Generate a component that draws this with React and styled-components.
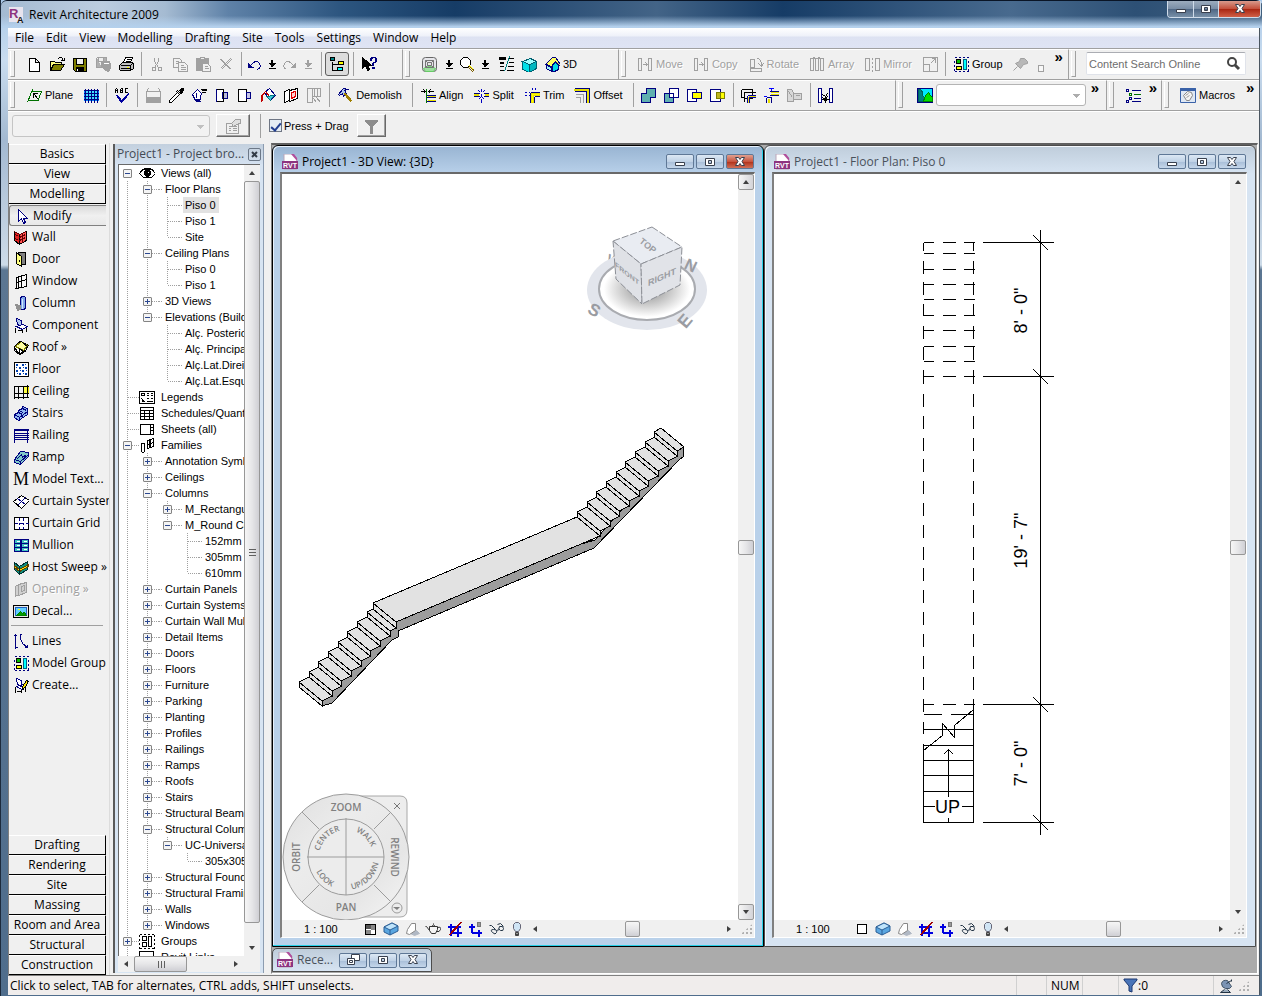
import React from "react";
import styled, { createGlobalStyle, css } from "styled-components";

const uiFont = `"Open Sans", "Noto Sans", sans-serif`;
const smallFont = `"Liberation Sans", Arial, sans-serif`;

const GlobalStyle = createGlobalStyle`
  * {
    box-sizing: border-box;
  }
  body {
    margin: 0;
    font-family: ${uiFont};
    font-size: 12px;
    line-height: 16px;
    color: #000;
  }
  button, input, select {
    font: inherit;
    color: inherit;
    margin: 0;
  }
  button {
    background: none;
    border: 0;
    padding: 0;
  }
`;

/* ---------- icons ---------- */

const navy = "#000080";
const grey = "#a0a0a0";

// every glyph is a list of [path, stroke, fill] on a 16px grid
const glyphs = {
  newDoc: [["M3 2h6l4 4v9H3zM9 2v4h4", "#000", "#fff"]],
  open: [
    ["M1 14V5h4l1 1h6v3", "#000", "#ffff80"],
    ["M1 14l3-6h11l-4 6z", "#000", "#808000"],
    ["M8 3l2-2h2l2 3M11 4h4V1", "#000"],
  ],
  save: [
    ["M1 2h13v13H3l-2-2z", "#000", "#808000"],
    ["M4 2h7v6H4z", "#000", "#f0f0f0"],
    ["M4 11h7v4H4z", "#000", "#000"],
    ["M5 12v2", "#fff"],
  ],
  saveAll: [
    ["M1 1h10v4M1 1v10h5", grey, "#b0b0b0"],
    ["M3 1h5v4H3z", grey, "#eee"],
    ["M6 5h8l2 5-3 5-4-2-3-3z", grey, grey],
    ["M8 7h5", "#fff"],
  ],
  print: [
    ["M5 6l2-5h7l-2 5", "#000", "#fff"],
    ["M8 3h4M7 5h4", "#000"],
    ["M1 9l3-3h10l1 2v4l-3 2H2l-1-1z", "#000", "#c0c0c0"],
    ["M2 9h10l2-2M2 12h10v2M12 9v4", "#000"],
    ["M8 11h2", "#ff0"],
  ],
  cut: [
    ["M5 1v4l4 6M9 1v4l-4 6", grey],
    ["M3 11h3v3H3zM9 11h3v3H9z", grey],
  ],
  copy: [
    ["M1 2h6l2 2v7H1zM3 5h3M3 7h3", grey],
    ["M6 6h6l3 3v6H6zM8 9h3M8 11h5M8 13h5", grey, "#f0f0f0"],
  ],
  paste: [
    ["M1 2h12v12H1z", grey, grey],
    ["M5 1h4v2H5z", grey, "#eee"],
    ["M7 7h5l3 3v5H7zM9 10h3M9 12h4", grey, "#f0f0f0"],
  ],
  del: [["M2 3l10 10M3 3l10 10M12 2L2 12M13 3L3 13", grey]],
  undo: [
    ["M2 6v5h5M2 11l4-4q4-4 7 0 2 4-2 6", navy],
    ["M2 7v4h4z", navy, navy],
  ],
  redo: [
    ["M13 6v5H8M13 11L9 7Q5 3 2 7q-2 4 2 6", grey],
    ["M13 7v4H9z", grey, grey],
  ],
  down: [["M7 3v7M8 3v7M4 7h7M5 8h5M6 9h3M4 12h7", "#000"]],
  downOff: [["M7 3v7M8 3v7M4 7h7M5 8h5M6 9h3M4 12h7", grey]],
  treeView: [
    ["M1 1h4v3H1zM3 5v9h5M3 8h5", "#000", "none"],
    ["M2 2h2v1H2z", "#008080", "#0ff"],
    ["M9 5h5v3H9z", "#000", "#ff0"],
    ["M8 11h5v3H8z", "#000", "#0ff"],
  ],
  help: [
    ["M1 1v11l3-3 2 5 2-1-2-4h4z", "#000", "#000"],
    ["M9 4V2l2-1h2l2 1v3l-3 2v2M10 4V2l2-1M14 2v3l-3 2v2M11 11h2v1h-2z", navy],
  ],
  viewCube: [
    ["M4 1h8q3 0 3 3v8q0 3-3 3H4q-3 0-3-3V4q0-3 3-3z", "#666", "#e6e6ea"],
    ["M2 12q6-4 12 0l-2 3H4z", "#6c6", "#9fe09f"],
    ["M4 4h8v7H4zM6 6h4v3H6zM4 4l2 2M12 4l-2 2M4 11l2-2M12 11l-2-2", "#777"],
  ],
  magnifier: [
    ["M4 1h4l3 3v4l-3 3H4L1 8V4z", "#000", "#fff"],
    ["M10 10l5 5M11 10l4 4M9 11l5 5", "#806000"],
    ["M10 9l4 4", "#ff0"],
  ],
  thinLines: [
    ["M1 1h6v2H1z", "#000", "#000"],
    ["M1 6h4M1 7h4M1 10h4M1 14h4M10 2h5M10 6h5M9 10h6M8 14h7", "#000"],
    ["M11 0L6 15", "#008080"],
  ],
  box: [
    ["M1 5l8-3 6 3-7 3z", "#006070", "#a0ffff"],
    ["M1 5l7 3v8l-7-3z", "#006070", "#00e0e8"],
    ["M8 8l7-3v7l-7 4z", "#006070", "#00b8c0"],
  ],
  house3d: [
    ["M2 8l6-3v10l-6-3z", navy, "#fff"],
    ["M8 9l3-3 3 3v4l-6 3z", navy, "#00d8e8"],
    ["M1 8l7-7 3 0 5 7-1 1-4-4-4 5-5-2z", navy, "#ffff60"],
    ["M2 9l5 2v4l-5-3z", navy, "#a0f0f8"],
  ],
  move: [["M1 2h3v12H1zM11 2h3v12h-3zM5 8h5M8 6l2 2-2 2", grey]],
  rotate: [["M2 3h4v8H2zM2 12h11v3H2zM8 2q5 0 5 7M10 7l3 3 2-3", grey]],
  array: [["M1 2h3v12H1zM6 2h3v12H6zM11 2h3v12h-3zM4 1l2 1M9 1l2 1", grey]],
  mirror: [["M1 2h4v12H1zM11 2h4v12h-4zM8 1v2M8 5v2M8 9v2M8 13v2", grey]],
  scale: [["M1 1h14v14H1zM1 8h6v7M8 7l5-5M9 2h4v4", grey]],
  group: [
    ["M1 1h2M5 1h2M9 1h2M13 1h2M1 15h2M5 15h2M9 15h2M13 15h2M1 4v2M1 8v2M1 12v2M15 4v2M15 8v2M15 12v2", navy],
    ["M3 3h4v4H3z", "#000", "#00c000"],
    ["M3 10h5v3H3z", "#000", "#ff0"],
    ["M10 3h3v10h-3z", "#006080", "#0ff"],
  ],
  pin: [
    ["M8 2h4l3 3v2l-4 1-3 4-5-5 4-2z", grey, "#b8b8b8"],
    ["M5 10l-4 4", grey],
  ],
  smallSquare: [["M5 9h5v6H5z", grey, "#f8f8f8"]],
  plane: [
    ["M4 4h12M1 13h11M6 2L1 15M15 4l-4 10", "#007000"],
    ["M7 6l5 6M7 6v4M7 6h4", "#000"],
  ],
  grid: [
    ["M1 3h14v10H1z", "#0080ff", "#40e0ff"],
    ["M0 3h16M0 6h16M0 9h16M0 12h16M2 1v14M5 1v14M8 1v14M11 1v14M14 1v14", navy],
  ],
  spell: [
    ["M1 5V2l1-1 1 1v3M1 3h2M6 1v4M6 1h2v2H6h2v2H6M13 1h-2v4h2", "#000"],
    ["M3 9l4 5 7-7M3 8l4 5 7-7M2 8l5 7 7-8", "#0000a0"],
  ],
  level: [
    ["M1 10h14v5H1z", grey, grey],
    ["M1 4h14M3 1L1 4v5M13 1l2 3v5", grey],
  ],
  dropper: [
    ["M9 5l2 2-8 8-2 0v-2z", "#000", "#fff"],
    ["M9 3l4 4M8 4l4 4M11 3l2-2h2v2l-2 3z", "#000", "#000"],
  ],
  paintPen: [
    ["M6 2l4 4-2 7H4L1 7z", navy, "#fff"],
    ["M5 5v5M4 14h5M4 12h5", navy],
    ["M9 2h6M10 3h5M10 5h4", "#000"],
  ],
  demoteFace: [
    ["M2 2h7v12H2z", navy, "#fff"],
    ["M8 5h5v6H8z", navy, "#b8b8d8"],
    ["M2 2h7v12H2", "#000"],
  ],
  matchFace: [
    ["M1 2h8v12H1z", "#000", "#fff"],
    ["M9 5h4v6H9z", navy, "#c8c8e8"],
  ],
  bucket: [
    ["M4 5l5-4 6 7-5 5z", navy, "#fff"],
    ["M6 9l8-1-4 5z", "#007080", "#40c8d8"],
    ["M5 5L1 8v6M4 5L2 7v6M5 4l4 5", "#c00000"],
    ["M9 1l6 7-5 5", navy],
  ],
  wallPaint: [
    ["M1 4l5-2v11l-5 2zM6 3l8-2v10l-8 3z", "#000", "#fff"],
    ["M8 5l4-1v5l-4 2z", "#e00000", "#ffd0d0"],
  ],
  splitFace: [["M1 1h5v14H1zM6 1h8v8H6zM8 1v8M11 1v8M7 11l3 4M10 10l4 5", grey]],
  hammer: [
    ["M1 7l5-6 4 1-3 1 2 3-3 3-1-3-3 2z", navy, "#b0c8e8"],
    ["M7 6l7 8M8 6l7 8M7 7l7 8", "#a08000", "none"],
  ],
  align: [
    ["M6 1v14", "#007000"],
    ["M0 4h5M3 2l2 2-2 2M13 4H8M10 2L8 4l2 2", "#000"],
    ["M6 8h9M6 10h9M6 14h9", navy],
    ["M7 9h8M7 13h8", "#e8e000"],
  ],
  split: [
    ["M0 6h6M0 9h6M10 6h6M10 9h6", navy],
    ["M0 7h5M0 8h5M11 7h5M11 8h5", "#e8e000"],
    ["M8 1v3M8 6v3M8 11v4M5 3l2 2M11 3L9 5M5 12l2-2M11 12l-2-2", "#0000c0"],
  ],
  trim: [
    ["M0 5h2M4 5h1M8 0v2M11 0v2M0 8h2M4 8h1", "#0000c0"],
    ["M6 5h10M10 9h6M6 5v10M10 9v6", navy],
    ["M7 6h8v2H9v7H7z", "#e8e000", "#ffff00"],
  ],
  offset: [
    ["M0 1h15v14M0 4h12v11", navy],
    ["M0 2h14v13h-1V3H0z", "#e8e000", "#ffff00"],
    ["M1 7h8v8M1 10h5v5", grey],
  ],
  join: [["M6 1h9v9h-5v5H1V6h5z", navy, "#60b0b0"]],
  cutGeom: [
    ["M1 6h9v9H1z", navy, "#60b0b0"],
    ["M6 1h9v9H6z", navy, "#fff"],
    ["M6 6h4v4H6z", navy],
  ],
  joinYellow: [
    ["M1 2h9v12H1z", navy, "#fff"],
    ["M6 5h9v6H6z", navy, "#ffff00"],
  ],
  unjoin: [
    ["M1 2h10v12H1z", navy, "#fff"],
    ["M7 5h8v6H7z", "#808000", "#ffff00"],
    ["M7 5h4v6H7z", "#808000", "#c0b820"],
  ],
  wallJoin: [
    ["M1 2h11v9H4v3M1 2v8h3M4 14V5h11", "#000"],
    ["M7 8h8M7 8v7M6 10h9M9 10v5", "#0000a0"],
    ["M8 9h7M8 9v6", "#e8e000"],
  ],
  coping: [
    ["M6 4h9M6 8h9M3 10v5M8 10v5M3 10h5", navy],
    ["M7 5h8M7 7h8M5 11v4M6 11v4", "#e8e000"],
    ["M8 0v3M5 1h5M0 9h3", "#0000ff"],
  ],
  wallOff: [["M1 2h4l2 3v9H1zM7 6h8v6H7zM2 4l4 6M9 8h4", grey, "#d8d8d8"]],
  beam: [
    ["M1 1h3v14H1zM12 1h3v14h-3z", navy, "#fff"],
    ["M4 12h8M5 7l3 2 2-3M8 9v6M5 10l5 4M10 9l-4 5", "#000"],
  ],
  picture: [
    ["M0 1h15v14H0z", navy, "#00e8ff"],
    ["M1 2h2q3 3 2 6l2 2-1 4H1z", "#006060", "#008080"],
    ["M6 14l2-6 3-3 2 3 2 2v4z", "#008000", "#00e000"],
  ],
  list: [
    ["M1 2h2v2H1zM6 3h9M4 10h2v2H4zM8 11h7M1 13h2v2H1z", navy],
    ["M4 6h2v2H4zM8 7h7", "#007000"],
    ["M6 14h9", navy],
  ],
  macro: [
    ["M0 1h15v14H0z", "#3a62a8", "#dfe8f4"],
    ["M0 1h15v2H0z", "#3a62a8", "#3a62a8"],
    ["M3 8l4-4 4 1 1 3-3 5-3 0z", "#888", "#f4f4f4"],
    ["M5 8l3-2M6 10l3-2", "#999"],
  ],
  props: [
    ["M1 5h12v10H1zM3 8h8M3 10h2M7 10h4M3 12h2M7 12h4", grey],
    ["M6 5l4-4h5v4l-4 1-3 2z", grey, "#e0e0e0"],
  ],
  filterOff: [["M2 2h12v1L9 8v7H7V8L2 3z", "#8c8c8c", "#8c8c8c"]],
  modify: [["M4 1v12l3-3 2 5 2-1-2-4h4z", navy, "#fff"]],
  wall: [
    ["M1 2l5 3v10l-5-4z", "#000", "#e02020"],
    ["M6 5l7-3v9l-7 4z", "#000", "#ff5050"],
    ["M1 2l5 3 7-3M2 5l3 2M2 9l3 2M6 8l6-3M6 11l6-3M9 4v9", "#600000"],
  ],
  door: [
    ["M4 1h8v12H8", "#000", "#808080"],
    ["M3 1l5 4v10l-5-3z", "#000", "#ffff80"],
    ["M6 8v2", "#000"],
  ],
  window: [["M3 4l10-3v12L3 15zM8 2v12M3 9l10-3M5 3v12M1 15h4", "#000", "#f8f8f8"]],
  column: [
    ["M7 2l2-1h2l1 1v11l-2 1H7z", navy, "#80a8e8"],
    ["M2 9l5 1v4l-3 1z", "#909090", "#909090"],
    ["M9 3v10", "#d0e4ff"],
  ],
  component: [
    ["M3 1l5 2v6L4 7z", navy, "#b0c8f0"],
    ["M3 9l6-2 5 2-5 3z", navy, "#fff"],
    ["M2 10v5M9 12v3M13 10v4M4 13h4", "#000"],
  ],
  roof: [
    ["M1 8l6-6 8 4-4 7-5 2z", "#000", "#fff"],
    ["M2 7l6-5 6 4-4 5z", "#808000", "#ffffa0"],
    ["M0 8l6-6h2l7 6M6 15V9l5 4M6 15l7-5V7M1 8v3l5 4", "#000"],
  ],
  floor: [
    ["M1 1h14v14H1z", "#000", "#fff"],
    ["M3 3h1v1H3zM9 3h1v1H9zM6 6h1v1H6zM12 6h1v1h-1zM3 9h1v1H3zM9 9h1v1H9zM6 12h1v1H6zM12 12h1v1h-1zM6 3h0M12 2v1M2 6h1M9 6h1M6 9h1M12 9h1M3 12h1M9 12h1", "#0040b0", "#0040b0"],
  ],
  ceiling: [
    ["M10 3h5v7h-5z", "#e8e000", "#ffff40"],
    ["M1 2v13M5 2v13M10 2v13M14 1v13M0 3h16M0 10h16M0 14h15", "#000"],
  ],
  stairs: [
    ["M1 9l4-2V5l4-2V1l5 2v6l-9 6-4-3z", navy, "#90b8f0"],
    ["M5 7l4 2M5 5l5 2M9 3l4 2M1 9l5 3 8-6M6 12v3M9 9v3", navy],
  ],
  railing: [["M0 2h16M0 3h16M0 6h16M0 8h16M0 10h16M0 12h16M1 2v13M14 2v13", navy]],
  ramp: [
    ["M1 10l6-8 8 1v4l-8 8-6-2z", navy, "#80c8c8"],
    ["M3 10l5-5 1 3 4-3M1 10l6 2 8-7M7 12v3", navy],
  ],
  curtainSystem: [
    ["M0 8l8-6 8 5-8 8z", "#000", "#fff"],
    ["M4 5l8 6M12 4l-8 8", navy],
  ],
  curtainGrid: [
    ["M1 2h14v12H1z", "#000", "#fff"],
    ["M6 2v3M6 7v2M6 11v3M10 2v3M10 7v2M10 11v3M1 8h3M6 8h4M12 8h3", navy],
  ],
  mullion: [
    ["M1 2h14v12H1z", navy, "#40c0c0"],
    ["M1 6h14M1 10h14M8 2v12M7 2v12", navy],
    ["M3 4h3M10 4h3M3 8h3M10 8h3M3 12h3M10 12h3", "#fff"],
  ],
  hostSweep: [
    ["M1 3l5 4 8-5v8l-8 5-5-5z", "#003030", "#109080"],
    ["M1 6l5 4 9-5v2l-9 5-5-4z", "#604000", "#ffe000"],
    ["M6 7v8", "#003030"],
  ],
  opening: [["M2 5l3-2v10l-3 2zM5 3l8-2v10l-8 3zM8 5l3-1v5l-3 1z", grey, "#d0d0d0"]],
  decal: [
    ["M0 2h15v12H0z", "#000", "#e8e8e8"],
    ["M2 4h11v8H2z", "#2060c0", "#60d0ff"],
    ["M3 12l4-4 2 2 2-1 2 3z", "#008000", "#00a000"],
    ["M4 6h2", "#ff0"],
  ],
  lines: [["M2 1v14M0 3l2-2 2 2M1 14h3M7 1v4l2 5 5 4M6 1h2M14 11v3h-3", navy]],
  create: [
    ["M3 1l5 2v6L4 7zM3 9l6-2 3 2-4 3z", navy, "#fff"],
    ["M2 9v6M8 12v3M12 9v5M3 14h4", "#000"],
    ["M9 9l4-6 2 1-4 7-2 1z", "#000", "#ffe000"],
  ],
  eye: [
    ["M0 8l4-4h8l4 4-4 4H4z", "#000", "#fff"],
    ["M6 5h4l1 2v2l-2 2H7L5 9V7z", "#000", "#000"],
    ["M1 6l4-3h6l4 3", "#000"],
    ["M8 7h1", "#fff"],
  ],
  legends: [
    ["M0 2h15v12H0z", "#000", "#fff"],
    ["M2 4h3v2H2zM7 4h2M11 4h2M7 6h2M11 6h2M2 9l2 2H2M7 9h2M11 9h2M2 12h3M7 12h6", "#000"],
  ],
  schedule: [["M1 2h13v12H1zM1 5h13M1 8h13M1 11h13M5 5v9M10 5v9", "#000", "#fff"]],
  sheet: [["M1 3h13v10H1zM11 3v10M11 6h3M11 9h3", "#000", "#fff"]],
  families: [
    ["M2 6h3v8l-1 1H3l-1-1z", "#000", "#fff"],
    ["M8 3l6-2v8l-6 2zM11 2v8M8 7l6-2M10 2v8", "#000", "#fff"],
  ],
  groups: [
    ["M0 1h2M4 1h2M8 1h2M12 1h2M0 15h2M4 15h2M8 15h2M12 15h2M0 1v2M0 5v2M0 9v2M0 13v2M15 1v2M15 5v2M15 9v2M15 13v2", "#000"],
    ["M3 3h4v4H3zM3 9h4v4H3zM9 3h3v10H9z", "#000", "#fff"],
  ],
  link: [["M0 2h14v12H0z", "#000", "#fff"]],
  detail: [
    ["M3 3h10v10H3z", "#000", "#fff"],
    ["M9 4h3v4H9zM4 9h4v3H4z", "#888", "#888"],
    ["M4 4h4v3H4z", "#555", "#555"],
  ],
  coarse: [["M3 3h9v9H3z", "#000", "#fff"]],
  shadow: [
    ["M6 12l6-3 3 3-5 2z", "#b0b8c4", "#b0b8c4"],
    ["M3 8l4-6 4 0v7l-6 4-3-1z", "#888", "#fff"],
  ],
  teapot: [
    [
      "M4 5h8v3l-2 4H6L4 9zM6 5q2-3 4 0M8 3v-1M4 9L1 5H0M12 6q4-1 3 2t-4 2",
      "#333",
      "#f4f4f4",
    ],
  ],
  cropOff: [
    ["M1 5h13M1 6h13M3 11h12M3 12h12M4 2v12M5 2v12M11 3v12M12 3v12", "#0000e0"],
    ["M14 1L2 14M15 1L3 14", "#a00000"],
  ],
  crop: [
    ["M1 5h6M1 6h6M4 2v9M5 2v9M4 11h10M4 12h10M11 8v7M12 8v7", "#0000e0"],
    ["M10 1h3v4h-3z", "#777", "#999"],
  ],
  glasses: [
    [
      "M1 4l2 0 4 4M5 8q4 0 3 3t-4 0 1-3zM11 5q4-1 4 2t-3 2-1-4zM8 9l3-1M9 3l3-1 3 3",
      "#234",
      "none",
    ],
  ],
  bulb: [
    ["M6 1h3l2 2v4l-2 3H6L4 7V3z", "#667", "#cfe4f4"],
    ["M6 11h3v3H6zM6 13h3", "#444", "#999"],
  ],
  satellite: [
    ["M3 5q1-4 6-3l4 6q-1 3-6 2-4-1-4-5z", "#456", "#7c94b4"],
    ["M8 5l5-3M13 1v2M6 11l-4 3h10l-3-3", "#234", "#9ab"],
  ],
};

const smoothGlyphs = [
  "viewCube",
  "pin",
  "macro",
  "shadow",
  "teapot",
  "glasses",
  "bulb",
  "satellite",
];

function Icon({ name, size = 16 }) {
  return (
    <svg
      width={size}
      height={size}
      viewBox="-0.5 -0.5 16 16"
      shapeRendering={smoothGlyphs.includes(name) ? "auto" : "crispEdges"}
      aria-hidden="true"
    >
      {glyphs[name].map(([d, stroke, fill = "none"], i) => (
        <path key={i} d={d} stroke={stroke} fill={fill} />
      ))}
    </svg>
  );
}

function BlueBox() {
  return (
    <svg width="16" height="16" viewBox="0 0 16 16" aria-hidden="true">
      <path d="M1 6l8-4 6 3v5l-8 4-6-3z" fill="#5aa6e0" stroke="#2b5e96" />
      <path d="M1 6l8-4 6 3-8 4z" fill="#bfe4fb" stroke="#2b5e96" />
      <path d="M7 9v5" stroke="#2b5e96" />
    </svg>
  );
}

function RvtLogo() {
  return (
    <svg width="16" height="16" viewBox="0 0 16 16" aria-hidden="true">
      <path d="M2 0h9l4 4v11H2z" fill="#fff" stroke="#b9a6b9" />
      <path d="M9 0h3l3 4v3z" fill="#b04f9c" />
      <path d="M0 7h16v8H0z" fill="#8d3480" />
      <text
        x="8"
        y="14"
        fontSize="7"
        fontWeight="700"
        fill="#fff"
        textAnchor="middle"
        fontFamily="Liberation Sans"
      >
        RVT
      </text>
    </svg>
  );
}

function AppLogo() {
  return (
    <svg width="16" height="18" viewBox="0 0 16 18" aria-hidden="true">
      <path d="M1 1h14v15H1z" fill="#e8e4ee" />
      <text x="1" y="12" fontSize="13" fontWeight="700" fill="#8d3480" fontFamily="Liberation Sans">
        R
      </text>
      <text x="9" y="17" fontSize="9" fontWeight="700" fill="#111" fontFamily="Liberation Sans">
        A
      </text>
    </svg>
  );
}

function CaptionGlyph({ kind }) {
  const stroke = "#39404e";
  return (
    <svg width="14" height="12" viewBox="-0.5 -0.5 14 12" aria-hidden="true">
      {kind === "min" && <path d="M2 6h9v3H2z" fill="#fff" stroke={stroke} />}
      {kind === "max" && (
        <path d="M2 2h9v7H2zM5 4v3h3V4z" fill="#fff" fillRule="evenodd" stroke={stroke} />
      )}
      {kind === "restore" && (
        <g fill="#fff" stroke={stroke}>
          <path d="M5 0h8v6H5z" />
          <path d="M1 4h7v6H1zM3 6h3v2H3z" />
        </g>
      )}
      {kind === "close" && (
        <path
          d="M2 1h3l1.500 2L8 1h3L8.500 5 11 9H8L6.500 7 5 9H2l2.500-4z"
          fill="#fff"
          stroke={stroke}
        />
      )}
    </svg>
  );
}

/* ---------- application frame ---------- */

const Frame = styled.div`
  display: flex;
  flex-direction: column;
  height: 100vh;
  min-height: 600px;
  padding: 0 2px 1px 7px;
  overflow: hidden;
  background: linear-gradient(
    to bottom,
    #a9c8e8 0,
    #c9dcef 60px,
    #a3b9d1 140px,
    #cddbe8 265px,
    #5b7692 270px,
    #4f6d8c 100%
  );
  border-left: 1px solid #1c2a3c;
`;

const TitleBar = styled.header`
  display: flex;
  align-items: center;
  height: 28px;
  flex: none;
  margin: 0 -2px 0 -7px;
  padding: 0 1px 0 7px;
  border-top: 1px solid #0a1526;
  border-radius: 6px 6px 0 0;
  background: linear-gradient(to bottom, rgba(180, 208, 236, 0) 55%, #b4d0ec 95%),
    linear-gradient(
      to right,
      #a4bad2 0,
      #bccde0 8%,
      #a5bbd2 13%,
      #5f82a8 18%,
      #2c557f 27%,
      #163c66 36%,
      #436487 52%,
      #163c66 62%,
      #486a8e 80%,
      #2d5075 90%,
      #40607f 100%
    );
`;

const AppTitle = styled.h1`
  flex: 1;
  margin: 0 0 0 5px;
  font-size: 12px;
  font-weight: 400;
`;

const CaptionGroup = styled.div`
  display: flex;
  align-self: flex-start;
  height: 17px;
  border: 1px solid #d0dcea;
  border-top: 0;
  border-radius: 0 0 4px 4px;
  overflow: hidden;
`;

const CaptionButton = styled.button`
  display: flex;
  align-items: center;
  justify-content: center;
  width: ${(props) => (props.$close ? 42 : 25)}px;
  background: ${(props) =>
    props.$close
      ? "linear-gradient(#d89a8c, #c4503c 48%, #a82410 50%, #d06048)"
      : "linear-gradient(#9cacbe, #7a8ea6 48%, #4e6684 50%, #7890a8)"};

  & + & {
    border-left: 1px solid #d0dcea;
  }
`;

const Content = styled.div`
  display: flex;
  flex-direction: column;
  flex: 1;
  min-height: 0;
  border-right: 1px solid #4a5560;
  background: #f0f0f0;
`;

const MenuBar = styled.nav`
  display: flex;
  align-items: center;
  gap: 12px;
  height: 21px;
  flex: none;
  padding-left: 7px;
  border-bottom: 1px solid #a0a0a0;
  background: linear-gradient(#fff 0, #eef1f9 40%, #dde2f2 45%, #dfe4f4 100%);
`;

const MenuItem = styled.button`
  white-space: nowrap;
`;

/* ---------- toolbars ---------- */

const ToolRow = styled.div`
  display: flex;
  height: 31px;
  flex: none;
  border-bottom: 1px solid #a0a0a0;
`;

const ToolGroup = styled.div`
  display: flex;
  align-items: center;
  flex: ${(props) => (props.$w ? `0 0 ${props.$w}px` : "1 1 0")};
  min-width: 0;
  padding-bottom: 2px;
  border-right: 1px solid #a0a0a0;
  border-top: 1px solid #fff;
  font-family: ${smallFont};
  font-size: 11px;

  &:last-child {
    border-right: 0;
  }

  &::before {
    content: "";
    flex: none;
    width: 3px;
    height: 25px;
    margin: 0 ${(props) => (props.$wide ? 10 : 7)}px 0 2px;
    border-right: 1px solid #a0a0a0;
    border-bottom: 1px solid #a0a0a0;
    border-left: 1px solid #fff;
  }
`;

const ToolButton = styled.button`
  display: flex;
  align-items: center;
  justify-content: center;
  flex: none;
  gap: 3px;
  width: ${(props) => (props.$narrow ? 18 : 23)}px;
  height: 24px;
  white-space: nowrap;

  ${(props) =>
    props.$label &&
    css`
      width: auto;
      padding: 0 6px 0 4px;
    `}
  ${(props) =>
    props.$pressed &&
    css`
      width: 24px;
      background: #dcdcdc;
      border: 1px solid #606060;
      border-radius: 3px;
    `}
  &:disabled {
    color: #a0a0a0;
    text-shadow: 1px 1px #fff;
  }
`;

const ToolSeparator = styled.span`
  flex: none;
  width: 1px;
  height: 24px;
  margin: 0 3px 0 4px;
  background: #a0a0a0;
`;

const Chevron = styled.button`
  flex: none;
  align-self: flex-start;
  width: 18px;
  font-size: 15px;
  font-weight: 700;
  line-height: 14px;
`;

const SearchBox = styled.label`
  display: flex;
  align-items: center;
  width: 160px;
  height: 23px;
  padding: 0 4px 0 2px;
  border: 1px solid #e0e3ea;
  border-top-color: #abadb3;
  border-radius: 2px;
  background: #fff;
`;

const SearchInput = styled.input`
  flex: 1;
  min-width: 0;
  border: 0;
  padding: 0;
  background: none;

  &::placeholder {
    color: #6d6d6d;
    opacity: 1;
  }
`;

const Combo = styled.select`
  flex: none;
  width: ${(props) => props.$w}px;
  height: 22px;
  appearance: none;
  border: 1px solid #b4b4b4;
  border-radius: 3px;
  background: linear-gradient(#adadad, #adadad) right 5px top 9px / 7px 1px no-repeat,
    linear-gradient(#adadad, #adadad) right 6px top 10px / 5px 1px no-repeat,
    linear-gradient(#adadad, #adadad) right 7px top 11px / 3px 1px no-repeat,
    linear-gradient(#adadad, #adadad) right 8px top 12px / 1px 1px no-repeat,
    ${(props) => (props.$white ? "#fff" : "#f4f4f4")};
`;

const OptionsBar = styled.div`
  display: flex;
  align-items: center;
  height: 32px;
  flex: none;
  padding: 0 0 4px 4px;
  border-top: 1px solid #fff;
  font-family: ${smallFont};
  font-size: 11px;
`;

const RaisedButton = styled.button`
  display: flex;
  align-items: center;
  justify-content: center;
  width: ${(props) => (props.$small ? 29 : 34)}px;
  height: 23px;
  margin: 0 6px;
  border: 1px solid;
  border-color: #fff #696969 #696969 #fff;
  box-shadow: inset -1px -1px #a0a0a0;
`;

const CheckLabel = styled.label`
  display: flex;
  align-items: center;
  gap: 2px;
  margin: 0 2px 0 5px;
`;

const CheckBox = styled.input`
  appearance: none;
  width: 13px;
  height: 13px;
  border: 1px solid #6f7684;
  background: #e4ecf4;
  display: grid;
  place-content: center;

  &:checked::before {
    content: "";
    width: 4px;
    height: 8px;
    border: solid #213e90;
    border-width: 0 2px 2px 0;
    transform: rotate(40deg);
  }
`;

/* ---------- design bar ---------- */

const Workspace = styled.main`
  display: flex;
  flex: 1;
  min-height: 0;
`;

const DesignBar = styled.aside`
  display: flex;
  flex-direction: column;
  width: 102px;
  flex: none;
  padding-top: 1px;
  border-left: 1px solid #808080;
  border-right: 1px solid #dcdcdc;
  background: #f0f0f0;
`;

const BarTab = styled.button`
  flex: none;
  width: 97px;
  height: 20px;
  border-right: 1px solid #000;
  border-bottom: 1px solid #000;
  border-top: 1px solid #fff;
  line-height: 16px;
  white-space: nowrap;
`;

const BarTools = styled.div`
  flex: 1;
  padding-top: 1px;
  min-height: 0;
  overflow: hidden;
`;

const BarTool = styled.button`
  display: flex;
  align-items: center;
  gap: 3px;
  width: 100px;
  height: 22px;
  padding-left: 4px;
  overflow: hidden;
  white-space: nowrap;

  ${(props) =>
    props.$active &&
    css`
      width: 97px;
      height: 21px;
      border: 1px solid #808080;
      border-right: 0;
      border-radius: 3px 0 0 3px;
      background: linear-gradient(#dadada, #f0f0f0 50%, #e8e8e8);
    `}
  &:disabled {
    color: #a0a0a0;
    text-shadow: 1px 1px #fff;
  }
  svg {
    flex: none;
  }
`;

const BarDivider = styled.hr`
  width: 92px;
  margin: 3px 2px 4px;
  border: 0;
  border-top: 1px solid #a0a0a0;
`;

/* ---------- project browser ---------- */

const Browser = styled.section`
  display: flex;
  flex-direction: column;
  width: 151px;
  flex: none;
  margin: 1px 7px 2px 3px;
  padding: 0 3px 1px;
  border-left: 2px solid #5a5a5a;
  border-right: 1px solid #8c9cb0;
  background: #d7e4f2;
`;

const BrowserHead = styled.div`
  display: flex;
  align-items: center;
  justify-content: space-between;
  height: 20px;
  flex: none;
  margin: 0 -3px;
  padding: 0 2px;
  color: #434a54;
  white-space: nowrap;
  background: linear-gradient(#c3d0de, #d4e1f0);
`;

const BrowserTitle = styled.span`
  overflow: hidden;
  text-overflow: ellipsis;
`;

const BrowserClose = styled.button`
  display: flex;
  flex: none;
  width: 13px;
  height: 13px;
  border: 1px solid #6c7888;
  border-radius: 2px;
  align-items: center;
  justify-content: center;
`;

const BrowserBody = styled.div`
  display: flex;
  flex: 1;
  min-height: 0;
  border: 1px solid #696969;
  border-right: 0;
  border-bottom: 0;
  background: #fff;
`;

const Tree = styled.ul`
  flex: 1;
  min-width: 0;
  margin: 0;
  padding: 0;
  list-style: none;
  overflow: hidden;
  font-family: ${smallFont};
  font-size: 11px;
`;

const TreeRow = styled.li`
  display: flex;
  align-items: center;
  height: 16px;
  white-space: nowrap;

  svg {
    flex: none;
  }
`;

const dots = "#a0a0a0 0 1px, transparent 1px 2px";
const rail = `repeating-linear-gradient(to bottom, ${dots}) 8px 0 / 1px`;

const Guide = styled.span`
  display: flex;
  align-items: center;
  flex: none;
  width: 20px;
  height: 16px;
  padding-left: 4px;
  background: ${(props) => (props.$line ? `${rail} ${props.$line} no-repeat` : "none")}
    ${(props) =>
      props.$node
        ? `${props.$line ? "," : ""} repeating-linear-gradient(to right, ${dots}) 9px 8px / 11px 1px no-repeat`
        : ""};
`;

const Stub = styled.span`
  flex: none;
  width: 4px;
  height: 1px;
  background: repeating-linear-gradient(to right, ${dots});
`;

const Expander = styled.button`
  width: 9px;
  height: 9px;
  border: 1px solid #848484;
  border-radius: 1px;
  background: linear-gradient(#2c4890, #2c4890) 1px 3px / 5px 1px no-repeat,
    ${(props) => (props.$open ? "" : "linear-gradient(#2c4890, #2c4890) 3px 1px / 1px 5px no-repeat,")}
    #f4f4f4;
`;

const TreeText = styled.span`
  padding: 0 3px 0 2px;
  margin-left: ${(props) => (props.$top ? 4 : 0)}px;
  background: ${(props) => (props.$selected ? "#e2e2e2" : "none")};
`;

/* ---------- scroll bars ---------- */

const ScrollTrack = styled.div`
  display: flex;
  flex: ${(props) => (props.$grow ? 1 : "none")};
  flex-direction: ${(props) => (props.$vertical ? "column" : "row")};
  ${(props) => (props.$vertical ? "width: 16px;" : "height: 16px;")}
  align-items: stretch;
  justify-content: space-between;
  background: #f0f0f0;
`;

const ScrollArrow = styled.button`
  display: flex;
  align-items: center;
  justify-content: center;
  flex: none;
  width: 16px;
  height: 16px;
  ${(props) =>
    props.$raised &&
    css`
      border: 1px solid #979797;
      border-radius: 2px;
      background: linear-gradient(to right, #f6f6f6, #d4d4d8);
    `}
`;

const ScrollThumb = styled.div`
  display: flex;
  align-items: center;
  justify-content: center;
  flex: ${(props) => props.$share || "none"};
  min-width: 15px;
  min-height: 15px;
  border: 1px solid #979797;
  border-radius: 2px;
  background: linear-gradient(
    ${(props) => (props.$vertical ? "to right" : "to bottom")},
    #f6f6f6,
    #e6e6e8 50%,
    #cfcfd4
  );
`;

const ScrollRest = styled.span`
  flex: ${(props) => props.$share};
`;

const ScrollCorner = styled.span`
  flex: none;
  width: 16px;
`;

const arrowPaths = {
  up: "M1 6l3-4 3 4z",
  down: "M1 2l3 4 3-4z",
  left: "M6 1L2 4l4 3z",
  right: "M2 1l4 3-4 3z",
};

function Arrow({ dir, raised }) {
  return (
    <ScrollArrow $raised={raised} aria-label={`Scroll ${dir}`}>
      <svg width="8" height="8" aria-hidden="true">
        <path d={arrowPaths[dir]} fill="#404040" />
      </svg>
    </ScrollArrow>
  );
}

function Ridges({ vertical }) {
  return (
    <svg width="8" height="8" aria-hidden="true">
      <path
        d={vertical ? "M1 1.500h7M1 4.500h7M1 7.500h7" : "M1.500 1v7M4.500 1v7M7.500 1v7"}
        stroke="#606060"
      />
    </svg>
  );
}

/* ---------- drawing windows ---------- */

const MdiArea = styled.section`
  display: flex;
  flex-direction: column;
  flex: 1;
  min-width: 0;
  margin-right: 1px;
  margin-bottom: 1px;
  border: 1px solid #808080;
  border-top: 2px solid #606060;
  border-right-color: #fff;
  border-bottom-color: #fff;
  background: #ababab;
`;

const Windows = styled.div`
  display: flex;
  flex: 1;
  min-height: 0;
  padding-right: 1px;
`;

const ViewWindow = styled.article`
  display: flex;
  flex-direction: column;
  flex: 1;
  min-width: 0;
  padding: 0 8px 8px 7px;
  border: 1px solid ${(props) => (props.$active ? "#000" : "#4c4c4c")};
  border-radius: 6px 6px 0 0;
  box-shadow: ${(props) =>
    props.$active ? "inset -1px -1px #28d0e8, inset 1px 1px #e8f2fc" : "inset 1px 1px #f4f8fc"};
  background: ${(props) =>
    props.$active
      ? "linear-gradient(#98b4d2, #b9d1ea 28px, #b9d1ea)"
      : "linear-gradient(#bfcddb, #d7e4f2 28px, #d7e4f2)"};
`;

const ViewTitle = styled.div`
  display: flex;
  align-items: center;
  gap: 4px;
  height: 26px;
  flex: none;
  padding: 5px 1px 0 2px;
  color: ${(props) => (props.$active ? "#000" : "#4a525c")};
`;

const ViewName = styled.h2`
  flex: 1;
  margin: 0;
  min-width: 0;
  font-size: 12px;
  font-weight: 400;
  white-space: nowrap;
  overflow: hidden;
`;

const ViewButton = styled.button`
  display: flex;
  align-items: center;
  justify-content: center;
  flex: none;
  width: 28px;
  height: 15px;
  border: 1px solid #5f7896;
  border-radius: 2px;
  background: linear-gradient(
    ${(props) =>
      props.$close
        ? "#e0a090, #c8553f 50%, #b03018 52%, #d07058"
        : "#dce8f4, #c0d2e6 50%, #a8bed8 52%, #c4d6ea"}
  );
`;

const ViewButtons = styled.div`
  display: flex;
  gap: 2px;
`;

const ViewBody = styled.div`
  display: flex;
  flex-direction: column;
  flex: 1;
  min-height: 0;
  border: 1px solid #fff;
  border-top: 2px solid #696969;
  border-left: 2px solid #808080;
  background: #f0f0f0;
`;

const CanvasRow = styled.div`
  display: flex;
  flex: 1;
  min-height: 0;
`;

const Canvas = styled.div`
  flex: 1;
  min-width: 0;
  overflow: hidden;
  background: #fff;

  svg {
    display: block;
  }
`;

const ViewControls = styled.div`
  display: flex;
  align-items: center;
  height: 17px;
  flex: none;
  background: #f0f0f0;
`;

const ScaleButton = styled.button`
  flex: none;
  width: 77px;
  padding-left: 22px;
  font-family: ${smallFont};
  font-size: 11px;
  text-align: left;
`;

const ControlButton = styled.button`
  display: flex;
  justify-content: center;
  flex: none;
  width: 21px;
`;

const SizeGrip = styled.span`
  flex: none;
  width: 17px;
  height: 12px;
  background: radial-gradient(#b0b0b0 1px, transparent 1px) 0 0 / 4px 4px;
  clip-path: polygon(100% 0, 100% 100%, 20% 100%);
`;

const MinimizedRow = styled.div`
  display: flex;
  height: 26px;
  flex: none;
  padding-top: 1px;
`;

const MinimizedWindow = styled.div`
  display: flex;
  align-items: center;
  width: 160px;
  height: 24px;
  padding: 0 4px;
  gap: 4px;
  border: 1px solid #4c4c4c;
  border-radius: 5px 5px 0 0;
  color: #4a525c;
  background: linear-gradient(#bfcddb, #d7e4f2);
`;

/* ---------- status bar ---------- */

const StatusBar = styled.footer`
  display: flex;
  align-items: stretch;
  height: 20px;
  flex: none;
  border-top: 1px solid #808080;
  background: #f0edec;
`;

const StatusText = styled.span`
  flex: 1;
  padding: 2px 0 0 2px;
  white-space: nowrap;
`;

const StatusCell = styled.span`
  display: flex;
  align-items: center;
  flex: none;
  width: ${(props) => props.$w}px;
  padding-left: 4px;
  border-left: 1px solid #d0d0d0;
`;

/* ---------- drawings ---------- */

const pts = (list) => list.map((p) => p.map(Math.round).join(",")).join(" ");

// treads and risers of one flight, from its lowest left corner
function Flight({ x, y, steps, lastRun }) {
  const run = 9.67;
  const rise = 10.05;
  const wide = [23, 19];
  const shapes = [];
  for (let k = 0; k < steps; k++) {
    const a = [Math.round(x + run * k), Math.round(y - rise * k)];
    const f = k === steps - 1 ? lastRun : 1;
    const b = [a[0] + Math.round(run * f), a[1] - Math.round(5 * f)];
    const down = [a[0], a[1] + 5];
    const w = ([px, py]) => [px + wide[0], py + wide[1]];
    shapes.push(
      <polygon key={`t${k}`} points={pts([a, b, w(b), w(a)])} />,
      <polygon key={`r${k}`} points={pts([a, w(a), w(down), down])} />
    );
  }
  return shapes;
}

function StairModel() {
  return (
    <g stroke="#000" fill="#e2e2e2" shapeRendering="crispEdges">
      <path
        fill="#9c9c9c"
        d="M322 701v5l10-3 60-63 6-3v-6l196-83 57-59 29-30 3-2v-10l-7 3-81 90-14 4-190 78-10 15z"
      />
      <Flight x={299} y={682} steps={8} lastRun={0.6} />
      <polygon points="373,603 396,622 396,628 373,609" />
      <polygon points="373,603 577,517 600,536 396,622" />
      <Flight x={577} y={512} steps={9} lastRun={0.7} />
    </g>
  );
}

function ViewCube() {
  return (
    <g fontFamily="Liberation Sans" fontWeight="700" fill="#9a9ca2" textAnchor="middle">
      <defs>
        <radialGradient id="cubeShade">
          <stop offset="0.3" stopColor="#b0b0b0" />
          <stop offset="0.9" stopColor="#fff" />
        </radialGradient>
      </defs>
      <text x="614" y="264" fontSize="13" transform="rotate(20 612 258)">
        W
      </text>
      <ellipse cx="647" cy="290" rx="60" ry="40" fill="#e2e5ec" />
      <ellipse
        cx="647"
        cy="289"
        rx="48"
        ry="31"
        fill="url(#cubeShade)"
        stroke="#a9abb0"
        strokeWidth="2"
      />
      <text x="691" y="271" fontSize="16" transform="rotate(25 691 265)">
        N
      </text>
      <text x="685" y="327" fontSize="18" transform="rotate(-50 685 321)">
        E
      </text>
      <text x="595" y="316" fontSize="17" transform="rotate(30 595 309)">
        S
      </text>
      <g stroke="#8c8f96" strokeDasharray="7 2">
        <path d="M652 227l30 20-41 17-28-23z" fill="#e9ecf2" />
        <path d="M613 241l28 23 1 40-26-25z" fill="#dfe1e6" />
        <path d="M641 264l41-17-2 38-38 19z" fill="#e1e3e8" />
      </g>
      <text fontSize="9" transform="translate(646 248) rotate(38)">
        TOP
      </text>
      <text fontSize="7" transform="translate(627 276) skewY(38)">
        FRONT
      </text>
      <text fontSize="9" transform="translate(662 280) skewY(-24)">
        RIGHT
      </text>
    </g>
  );
}

function SteeringWheel() {
  return (
    <g
      stroke="#9c9c9c"
      fill="none"
      fontFamily="Open Sans"
      fontWeight="600"
      textAnchor="middle"
    >
      <defs>
        <linearGradient id="wheelFill" x1="0" y1="0" x2="1" y2="1">
          <stop offset="0" stopColor="#dedede" />
          <stop offset="0.35" stopColor="#ececec" />
          <stop offset="0.7" stopColor="#e6e6e6" />
          <stop offset="1" stopColor="#f6f6f6" />
        </linearGradient>
        <path id="arcTopLeft" d="M319 857a27 27 0 0 1 27-27" />
        <path id="arcTopRight" d="M346 830a27 27 0 0 1 27 27" />
        <path id="arcLowLeft" d="M313 857a33 33 0 0 0 33 33" />
        <path id="arcLowRight" d="M346 890a33 33 0 0 0 33-33" />
      </defs>
      <path d="M346 796h54q7 0 7 7v107q0 7-7 7h-54z" fill="#ededed" stroke="#a8a8a8" />
      <circle cx="346" cy="857" r="63" fill="url(#wheelFill)" />
      <circle cx="346" cy="857" r="38" fill="#ececec" />
      <path d="M346 818v77M307 857h77M302 812l17 17M391 812l-17 17M302 902l17-17M391 902l-17-17" />
      <path d="M394 803l6 6M400 803l-6 6" stroke="#777" />
      <circle cx="397" cy="908" r="5" />
      <path d="M393 907h7l-3 3z" fill="#808080" stroke="none" />
      <g fill="#808080" stroke="none" fontSize="10">
        <text x="346" y="811">
          ZOOM
        </text>
        <text x="346" y="911">
          PAN
        </text>
        <text transform="translate(300 857) rotate(-90)">ORBIT</text>
        <text transform="translate(391 857) rotate(90)">REWIND</text>
        <g fontSize="8">
          <text>
            <textPath href="#arcTopLeft" startOffset="50%">
              CENTER
            </textPath>
          </text>
          <text>
            <textPath href="#arcTopRight" startOffset="50%">
              WALK
            </textPath>
          </text>
          <text>
            <textPath href="#arcLowLeft" startOffset="50%">
              LOOK
            </textPath>
          </text>
          <text>
            <textPath href="#arcLowRight" startOffset="50%">
              UP/DOWN
            </textPath>
          </text>
        </g>
      </g>
    </g>
  );
}

function ModelDrawing() {
  return (
    <svg width="100%" height="100%" role="img" aria-label="3D view of the stair">
      <g transform="translate(-282 -174)">
        <StairModel />
        <ViewCube />
        <SteeringWheel />
      </g>
    </svg>
  );
}

const hiddenTreads = [242, 253, 269, 284, 299, 315, 330, 346, 361, 376, 704];
const visibleTreads = [729, 745, 760, 775, 791, 822];
const dimensionLines = [242, 376, 704, 822];
const dimensions = [
  { y: 310, label: "8' - 0\"" },
  { y: 540, label: "19' - 7\"" },
  { y: 763, label: "7' - 0\"" },
];
const upperDashes = [
  [242, 250],
  [260, 273],
  [281, 294],
  [303, 315],
  [325, 338],
  [346, 359],
  [369, 383],
];
const longDashes = Array.from({ length: 15 }, (_, i) => {
  const top = Math.round(393 + i * 21.8);
  return [top, top + 13];
});

function PlanDrawing() {
  const dashes = [...upperDashes, ...longDashes];
  return (
    <svg width="100%" height="100%" role="img" aria-label="Floor plan of the stair">
      <g
        transform="translate(-773.5 -173.5)"
        stroke="#000"
        fill="none"
        shapeRendering="crispEdges"
      >
        {hiddenTreads.map((y) => (
          <path key={y} d={`M923 ${y}h10M942 ${y}h13M963 ${y}h11`} />
        ))}
        {visibleTreads.map((y) => (
          <path key={y} d={`M923 ${y}h50`} />
        ))}
        {dashes.map(([a, b]) => (
          <path key={a} d={`M923 ${a}V${b}M973 ${a}V${b}`} />
        ))}
        <path d="M923 714h18M950 714h23M923 806h11M961 806h12" />
        <path d="M923 721v12M923 743v79M973 709v113" />
        <path d="M973 709l-19 16v12l-12-14v12l-19 15" />
        <path d="M948 749v47M943 754l5-5 5 5M948 817v5" />
        <path d="M1040 229v605" />
        {dimensionLines.map((y) => (
          <path key={y} d={`M982 ${y}h71M1033 ${y - 7}l15 15`} />
        ))}
        <g
          fill="#000"
          stroke="none"
          fontFamily="Liberation Sans"
          fontSize="18"
          textAnchor="middle"
        >
          <text x="947" y="812">
            UP
          </text>
          {dimensions.map(({ y, label }) => (
            <text key={y} transform={`translate(1026 ${y}) rotate(-90)`}>
              {label}
            </text>
          ))}
        </g>
      </g>
    </svg>
  );
}

/* ---------- data ---------- */

const menus = [
  "File",
  "Edit",
  "View",
  "Modelling",
  "Drafting",
  "Site",
  "Tools",
  "Settings",
  "Window",
  "Help",
];

// "|" is a separator, a leading "-" marks a disabled tool
const standardTools = [
  ["newDoc"],
  ["open"],
  ["save"],
  ["-saveAll"],
  ["print"],
  "|",
  ["-cut"],
  ["-copy"],
  ["-paste"],
  ["-del"],
  "|",
  ["undo", "", "narrow"],
  ["down", "", "narrow"],
  ["-redo", "", "narrow"],
  ["-downOff", "", "narrow"],
  "|",
  ["treeView", "", "pressed"],
  "|",
  ["help"],
];
const viewTools = [
  ["viewCube"],
  ["down", "", "narrow"],
  ["magnifier", "", "narrow"],
  ["down", "", "narrow"],
  ["thinLines"],
  ["box"],
  ["house3d", "3D"],
];
const editTools = [
  ["-move", "Move"],
  ["-move", "Copy"],
  ["-rotate", "Rotate"],
  ["-array", "Array"],
  ["-mirror", "Mirror"],
  ["-scale"],
  "|",
  ["group", "Group"],
  ["-pin"],
  ["-smallSquare", "", "narrow"],
];
const modelTools = [
  ["plane", "Plane"],
  ["grid"],
  "|",
  ["spell"],
  "|",
  ["-level"],
  ["dropper"],
  ["paintPen"],
  ["demoteFace"],
  ["matchFace"],
  ["bucket"],
  ["wallPaint"],
  ["-splitFace"],
  "|",
  ["hammer", "Demolish"],
  "|",
  ["align", "Align"],
  ["split", "Split"],
  ["trim", "Trim"],
  ["offset", "Offset"],
  "|",
  ["join"],
  ["cutGeom"],
  ["joinYellow"],
  ["unjoin"],
  "|",
  ["wallJoin"],
  ["coping"],
  ["-wallOff"],
  "|",
  ["beam"],
];

const upperTabs = ["Basics", "View", "Modelling"];
const lowerTabs = [
  "Drafting",
  "Rendering",
  "Site",
  "Massing",
  "Room and Area",
  "Structural",
  "Construction",
];
const modellingTools = [
  ["modify", "Modify"],
  ["wall", "Wall"],
  ["door", "Door"],
  ["window", "Window"],
  ["column", "Column"],
  ["component", "Component"],
  ["roof", "Roof »"],
  ["floor", "Floor"],
  ["ceiling", "Ceiling"],
  ["stairs", "Stairs"],
  ["railing", "Railing"],
  ["ramp", "Ramp"],
  ["modelText", "Model Text..."],
  ["curtainSystem", "Curtain System"],
  ["curtainGrid", "Curtain Grid"],
  ["mullion", "Mullion"],
  ["hostSweep", "Host Sweep »"],
  ["opening", "Opening »"],
  ["decal", "Decal..."],
];
const commonTools = [
  ["lines", "Lines"],
  ["group", "Model Group"],
  ["create", "Create..."],
];

const leaf = (label) => ({ label });
const closed = (label) => ({ label, open: false });
const opened = (label, children) => ({ label, open: true, children });

const project = [
  {
    ...opened("Views (all)", [
      opened("Floor Plans", [{ label: "Piso 0", selected: true }, leaf("Piso 1"), leaf("Site")]),
      opened("Ceiling Plans", [leaf("Piso 0"), leaf("Piso 1")]),
      closed("3D Views"),
      opened("Elevations (Building Elevation)", [
        leaf("Alç. Posterior"),
        leaf("Alç. Principal"),
        leaf("Alç.Lat.Direito"),
        leaf("Alç.Lat.Esquerdo"),
      ]),
    ]),
    icon: "eye",
  },
  { label: "Legends", icon: "legends" },
  { label: "Schedules/Quantities", icon: "schedule" },
  { label: "Sheets (all)", icon: "sheet" },
  {
    ...opened("Families", [
      closed("Annotation Symbols"),
      closed("Ceilings"),
      opened("Columns", [
        closed("M_Rectangular Column"),
        opened("M_Round Column", [
          leaf("152mm Diameter"),
          leaf("305mm Diameter"),
          leaf("610mm Diameter"),
        ]),
      ]),
      closed("Curtain Panels"),
      closed("Curtain Systems"),
      closed("Curtain Wall Mullions"),
      closed("Detail Items"),
      closed("Doors"),
      closed("Floors"),
      closed("Furniture"),
      closed("Parking"),
      closed("Planting"),
      closed("Profiles"),
      closed("Railings"),
      closed("Ramps"),
      closed("Roofs"),
      closed("Stairs"),
      closed("Structural Beam Systems"),
      opened("Structural Columns", [
        opened("UC-Universal Column", [leaf("305x305x97UC")]),
      ]),
      closed("Structural Foundations"),
      closed("Structural Framing"),
      closed("Walls"),
      closed("Windows"),
    ]),
    icon: "families",
  },
  { ...closed("Groups"), icon: "groups" },
  { label: "Revit Links", icon: "link" },
];

/* ---------- parts ---------- */

function Tools({ items }) {
  return items.map((item, i) => {
    if (item === "|") return <ToolSeparator key={i} />;
    const [id, label, mode] = item;
    const disabled = id.startsWith("-");
    const name = disabled ? id.slice(1) : id;
    return (
      <ToolButton
        key={i}
        disabled={disabled}
        aria-label={label || name}
        $label={Boolean(label)}
        $narrow={mode === "narrow"}
        $pressed={mode === "pressed"}
      >
        <Icon name={name} />
        {label}
      </ToolButton>
    );
  });
}

const SerifM = styled.span`
  flex: none;
  width: 16px;
  font-family: "Liberation Serif", serif;
  font-size: 18px;
`;

function BarItem({ icon, label }) {
  return (
    <BarTool $active={icon === "modify"} disabled={icon === "opening"}>
      {icon === "modelText" ? <SerifM aria-hidden="true">M</SerifM> : <Icon name={icon} />}
      {label}
    </BarTool>
  );
}

function TreeNodes({ nodes, rails = [] }) {
  return nodes.map((node, i) => {
    const last = i === nodes.length - 1;
    const expandable = node.open !== undefined;
    const first = rails.length === 0 && i === 0;
    return (
      <React.Fragment key={node.label}>
        <TreeRow>
          {rails.map((on, k) => (
            <Guide key={k} $line={on ? "100%" : ""} />
          ))}
          <Guide $node $line={first ? "" : last && rails.length ? "50%" : "100%"}>
            {expandable && (
              <Expander $open={node.open} aria-label={`Toggle ${node.label}`} />
            )}
          </Guide>
          {node.icon ? <Icon name={node.icon} /> : <Stub />}
          <TreeText $top={Boolean(node.icon)} $selected={node.selected}>
            {node.label}
          </TreeText>
        </TreeRow>
        {node.children && <TreeNodes nodes={node.children} rails={[...rails, !last]} />}
      </React.Fragment>
    );
  });
}

function DrawingWindow({ title, active, controls, children }) {
  return (
    <ViewWindow $active={active}>
      <ViewTitle $active={active}>
        <RvtLogo />
        <ViewName>{title}</ViewName>
        <ViewButtons>
          <ViewButton aria-label="Minimize">
            <CaptionGlyph kind="min" />
          </ViewButton>
          <ViewButton aria-label="Maximize">
            <CaptionGlyph kind="max" />
          </ViewButton>
          <ViewButton $close={active} aria-label="Close">
            <CaptionGlyph kind="close" />
          </ViewButton>
        </ViewButtons>
      </ViewTitle>
      <ViewBody>
        <CanvasRow>
          <Canvas>{children}</Canvas>
          <ScrollTrack $vertical>
            <Arrow dir="up" raised={active} />
            <ScrollThumb $vertical />
            <Arrow dir="down" raised={active} />
          </ScrollTrack>
        </CanvasRow>
        <ViewControls>
          <ScaleButton>1 : 100</ScaleButton>
          {controls.map((name) => (
            <ControlButton key={name} aria-label={name}>
              {name === "style" ? <BlueBox /> : <Icon name={name} />}
            </ControlButton>
          ))}
          <ScrollTrack $grow>
            <Arrow dir="left" />
            <ScrollThumb />
            <Arrow dir="right" />
          </ScrollTrack>
          <SizeGrip />
        </ViewControls>
      </ViewBody>
    </ViewWindow>
  );
}

function App() {
  return (
    <Frame>
      <GlobalStyle />
      <TitleBar>
        <AppLogo />
        <AppTitle>Revit Architecture 2009</AppTitle>
        <CaptionGroup>
          <CaptionButton aria-label="Minimize">
            <CaptionGlyph kind="min" />
          </CaptionButton>
          <CaptionButton aria-label="Maximize">
            <CaptionGlyph kind="max" />
          </CaptionButton>
          <CaptionButton $close aria-label="Close">
            <CaptionGlyph kind="close" />
          </CaptionButton>
        </CaptionGroup>
      </TitleBar>
      <Content>
        <MenuBar>
          {menus.map((name) => (
            <MenuItem key={name}>{name}</MenuItem>
          ))}
        </MenuBar>
        <ToolRow>
          <ToolGroup $w={395}>
            <Tools items={standardTools} />
          </ToolGroup>
          <ToolGroup $w={216}>
            <Tools items={viewTools} />
          </ToolGroup>
          <ToolGroup $w={450}>
            <Tools items={editTools} />
            <Chevron aria-label="More edit tools">»</Chevron>
          </ToolGroup>
          <ToolGroup $wide>
            <SearchBox>
              <SearchInput placeholder="Content Search Online" aria-label="Content Search Online" />
              <svg width="15" height="15" viewBox="0 0 15 15" aria-hidden="true">
                <circle cx="6" cy="6" r="4" fill="none" stroke="#444" strokeWidth="2" />
                <path d="M9 9l4 4" stroke="#444" strokeWidth="3" />
              </svg>
            </SearchBox>
          </ToolGroup>
        </ToolRow>
        <ToolRow>
          <ToolGroup>
            <Tools items={modelTools} />
          </ToolGroup>
          <ToolGroup $w={211} $wide>
            <Tools items={[["picture"]]} />
            <Combo $w={150} $white aria-label="Design option" />
            <Chevron aria-label="More design options">»</Chevron>
          </ToolGroup>
          <ToolGroup $w={55}>
            <Tools items={[["list"]]} />
            <Chevron aria-label="More worksets">»</Chevron>
          </ToolGroup>
          <ToolGroup $w={97}>
            <Tools items={[["macro", "Macros"]]} />
            <Chevron aria-label="More macros">»</Chevron>
          </ToolGroup>
        </ToolRow>
        <OptionsBar>
          <Combo $w={198} disabled aria-label="Type selector" />
          <RaisedButton disabled aria-label="Properties">
            <Icon name="props" />
          </RaisedButton>
          <ToolSeparator />
          <CheckLabel>
            <CheckBox type="checkbox" defaultChecked />
            Press + Drag
          </CheckLabel>
          <RaisedButton $small disabled aria-label="Filter">
            <Icon name="filterOff" />
          </RaisedButton>
        </OptionsBar>
        <Workspace>
          <DesignBar>
            {upperTabs.map((name) => (
              <BarTab key={name}>{name}</BarTab>
            ))}
            <BarTools>
              {modellingTools.map(([icon, label]) => (
                <BarItem key={label} icon={icon} label={label} />
              ))}
              <BarDivider />
              {commonTools.map(([icon, label]) => (
                <BarItem key={label} icon={icon} label={label} />
              ))}
            </BarTools>
            {lowerTabs.map((name) => (
              <BarTab key={name}>{name}</BarTab>
            ))}
          </DesignBar>
          <Browser>
            <BrowserHead>
              <BrowserTitle>Project1 - Project bro...</BrowserTitle>
              <BrowserClose aria-label="Close browser">
                <svg width="7" height="7" aria-hidden="true">
                  <path d="M1 1l5 5M6 1L1 6" stroke="#333c48" strokeWidth="2" />
                </svg>
              </BrowserClose>
            </BrowserHead>
            <BrowserBody>
              <Tree>
                <TreeNodes nodes={project} />
              </Tree>
              <ScrollTrack $vertical>
                <Arrow dir="up" />
                <ScrollThumb $vertical $share={44}>
                  <Ridges vertical />
                </ScrollThumb>
                <ScrollRest $share={1} />
                <Arrow dir="down" />
              </ScrollTrack>
            </BrowserBody>
            <ScrollTrack>
              <Arrow dir="left" />
              <ScrollThumb $share={5}>
                <Ridges />
              </ScrollThumb>
              <ScrollRest $share={4} />
              <Arrow dir="right" />
              <ScrollCorner />
            </ScrollTrack>
          </Browser>
          <MdiArea>
            <Windows>
              <DrawingWindow
                active
                title="Project1 - 3D View: {3D}"
                controls={[
                  "detail",
                  "style",
                  "shadow",
                  "teapot",
                  "cropOff",
                  "crop",
                  "glasses",
                  "bulb",
                ]}
              >
                <ModelDrawing />
              </DrawingWindow>
              <DrawingWindow
                title="Project1 - Floor Plan: Piso 0"
                controls={["coarse", "style", "shadow", "cropOff", "crop", "glasses", "bulb"]}
              >
                <PlanDrawing />
              </DrawingWindow>
            </Windows>
            <MinimizedRow>
              <MinimizedWindow>
                <RvtLogo />
                <ViewName>Rece...</ViewName>
                <ViewButtons>
                  <ViewButton aria-label="Restore">
                    <CaptionGlyph kind="restore" />
                  </ViewButton>
                  <ViewButton aria-label="Maximize">
                    <CaptionGlyph kind="max" />
                  </ViewButton>
                  <ViewButton aria-label="Close">
                    <CaptionGlyph kind="close" />
                  </ViewButton>
                </ViewButtons>
              </MinimizedWindow>
            </MinimizedRow>
          </MdiArea>
        </Workspace>
        <StatusBar>
          <StatusText>
            Click to select, TAB for alternates, CTRL adds, SHIFT unselects.
          </StatusText>
          <StatusCell $w={30} />
          <StatusCell $w={36}>NUM</StatusCell>
          <StatusCell $w={36} />
          <StatusCell $w={95}>
            <svg width="15" height="15" viewBox="0 0 15 15" aria-hidden="true">
              <path d="M1 1h13v1L9 8v6l-3-1V8L1 2z" fill="#4a74b8" stroke="#1c3870" />
            </svg>
            :0
          </StatusCell>
          <StatusCell $w={46}>
            <Icon name="satellite" />
            <SizeGrip />
          </StatusCell>
        </StatusBar>
      </Content>
    </Frame>
  );
}

export default App;
